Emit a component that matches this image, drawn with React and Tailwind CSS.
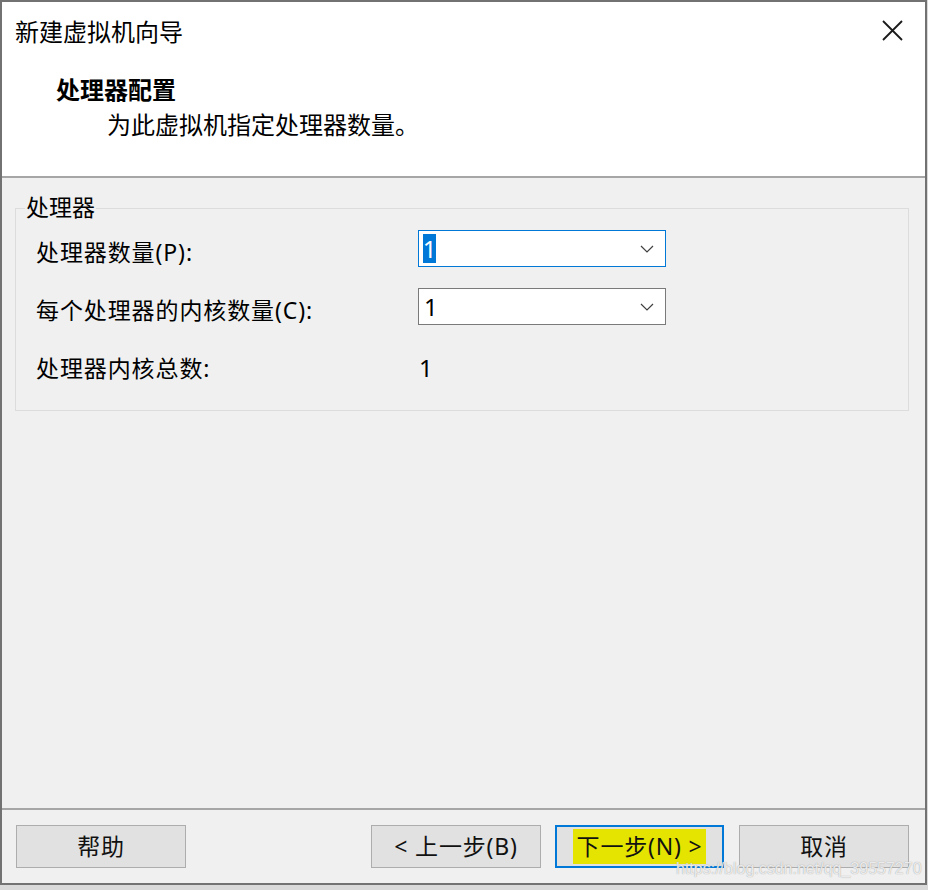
import React from "react";

function Chevron() {
  return (
    <svg width="14" height="8" viewBox="0 0 14 8" fill="none">
      <path d="M1 1 L7 7 L13 1" stroke="#404040" strokeWidth="1.2" />
    </svg>
  );
}

function Select({ focused }) {
  return (
    <div
      className={
        "w-[248px] h-[37px] bg-white flex items-center justify-between pl-[4px] pr-[11px] border " +
        (focused ? "border-[#0078d7]" : "border-[#7a7a7a]")
      }
    >
      {focused ? (
        <span className="bg-[#0078d7] text-white h-[29px] w-[13px] flex items-center justify-center text-[24px] leading-[29px]">
          1
        </span>
      ) : (
        <span className="text-black text-[24px] leading-[29px] pl-[1px]">1</span>
      )}
      <Chevron />
    </div>
  );
}

function Button({ children, primary }) {
  return (
    <div
      className={
        "h-[43px] flex items-center justify-center bg-[#e1e1e1] text-[#111] text-[23px] tracking-[0.8px] " +
        (primary ? "w-[169px] border-2 border-[#0078d7]" : "w-[170px] border border-[#adadad]")
      }
    >
      {children}
    </div>
  );
}

export default function App() {
  return (
    <div className="w-[928px] h-[890px] bg-[#d9d9d9] overflow-hidden font-['Noto_Sans','Noto_Sans_CJK_SC',sans-serif]">
      <div className="w-[927px] h-[885px] border-2 border-[#727272] flex flex-col bg-[#f0f0f0] relative">
        {/* Header */}
        <div className="bg-white h-[174px] flex flex-col">
          <div className="h-[60px] flex items-center justify-between pl-[13px] pr-[22px]">
            <span className="text-[24px] leading-[30px] text-black">新建虚拟机向导</span>
            <svg width="21" height="21" viewBox="0 0 21 21" className="mb-[4px]">
              <path d="M1 1 L20 20 M20 1 L1 20" stroke="#1a1a1a" strokeWidth="1.8" />
            </svg>
          </div>
          <div className="mt-[13px] pl-[54px] text-[24px] leading-[30px] font-bold text-black">
            处理器配置
          </div>
          <div className="mt-[5px] pl-[105px] text-[24px] leading-[30px] text-black">
            为此虚拟机指定处理器数量。
          </div>
        </div>
        <div className="h-[2px] bg-[#a6a6a6]" />

        {/* Body */}
        <div className="flex-1 flex flex-col">
          <div className="relative mt-[30px] ml-[13px] w-[894px] h-[203px] border border-[#dcdcdc] flex flex-col pt-[13px] pl-[20px]">
            <span className="absolute left-[9px] top-[-17px] bg-[#f0f0f0] px-[1px] text-[23px] leading-[30px] text-black">
              处理器
            </span>
            <div className="h-[58px] flex items-start">
              <span className="w-[382px] mt-[15px] text-[23px] leading-[30px] tracking-[0.9px] text-black">处理器数量(P):</span>
              <div className="mt-[8px]">
                <Select focused />
              </div>
            </div>
            <div className="h-[58px] flex items-start">
              <span className="w-[382px] mt-[15px] text-[23px] leading-[30px] tracking-[0.9px] text-black">每个处理器的内核数量(C):</span>
              <div className="mt-[8px]">
                <Select />
              </div>
            </div>
            <div className="h-[58px] flex items-start">
              <span className="w-[382px] mt-[15px] text-[23px] leading-[30px] tracking-[0.9px] text-black">处理器内核总数:</span>
              <span className="mt-[15px] pl-[1px] text-[24px] leading-[30px] text-black">1</span>
            </div>
          </div>
        </div>

        {/* Footer */}
        <div className="h-[2px] bg-[#a6a6a6]" />
        <div className="h-[73px] flex items-start pt-[15px] pl-[14px] pr-[16px]">
          <Button>帮助</Button>
          <div className="flex-1" />
          <Button>&lt; 上一步(B)</Button>
          <div className="w-[14px]" />
          <Button primary>
            <span className="bg-[#e4e400] leading-[35px] px-[4px]">下一步(N) &gt;</span>
          </Button>
          <div className="w-[15px]" />
          <Button>取消</Button>
        </div>

        <span className="absolute left-[674px] top-[856px] text-[16px] leading-[22px] font-['Liberation_Sans',sans-serif] text-white/80 [text-shadow:0_0_1px_#8a8a8a] pointer-events-none">
          https://blog.csdn.net/qq_39557270
        </span>
      </div>
    </div>
  );
}
